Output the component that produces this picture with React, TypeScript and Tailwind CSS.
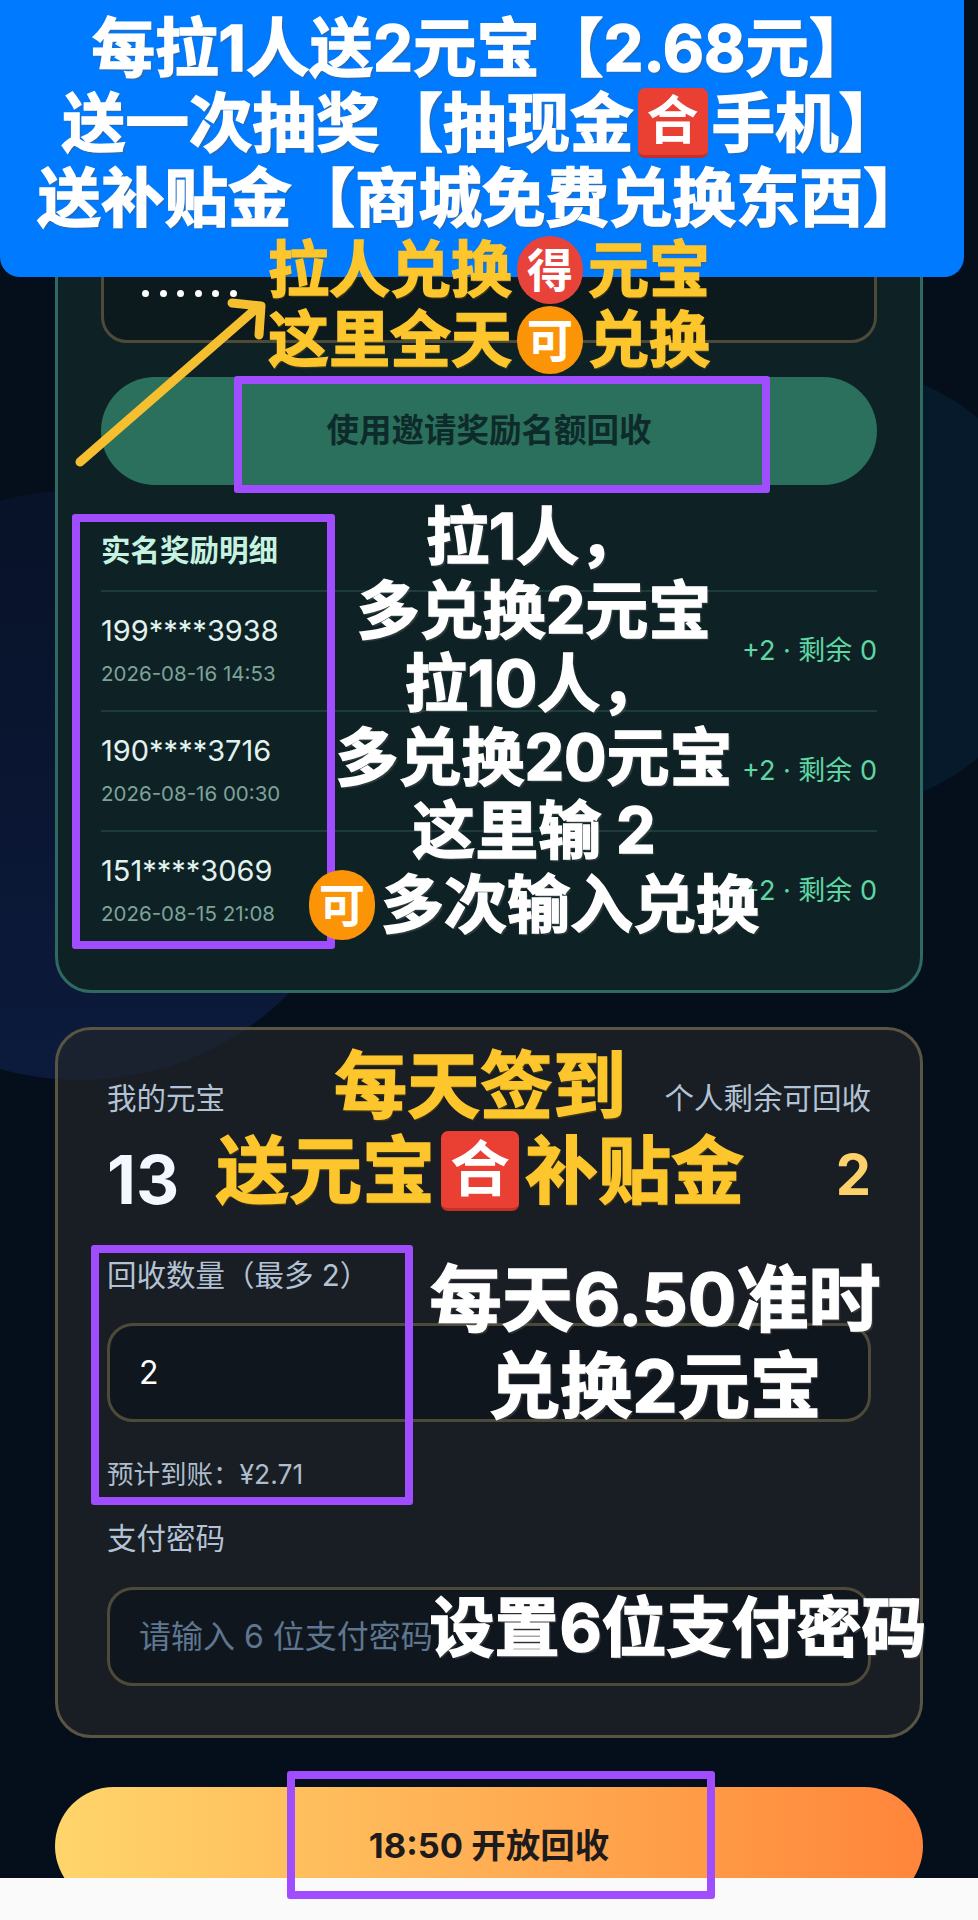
import React from "react";

const sans = 'font-["Inter","Noto_Sans_CJK_SC",sans-serif]';

function SquareEmoji({ size }: { size: "sm" | "lg" }) {
  const box = size === "sm" ? "w-[70px] h-[70px] text-[52px] mx-[4px]" : "w-[78px] h-[80px] text-[60px] mx-[6px]";
  return (
    <span className={`relative inline-flex shrink-0 items-center justify-center rounded-[7px] bg-[#ea3f33] text-white font-bold leading-none border-b-[3px] border-[#c62f27] [text-shadow:none] [-webkit-text-stroke:0] ${box}`}>
      合
    </span>
  );
}

function CircleEmoji({ char, tone, size = "w-[66px] h-[68px] text-[46px] mx-[5px]" }: { char: string; tone: "red" | "orange"; size?: string }) {
  const bg = tone === "red" ? "bg-[#e8433a]" : "bg-[#fb9507]";
  return (
    <span className={`inline-flex shrink-0 items-center justify-center rounded-full text-white font-bold leading-none [text-shadow:none] [-webkit-text-stroke:0] ${bg} ${size}`}>
      {char}
    </span>
  );
}

const rows = [
  { phone: "199****3938", date: "2026-08-16 14:53" },
  { phone: "190****3716", date: "2026-08-16 00:30" },
  { phone: "151****3069", date: "2026-08-15 21:08" },
];

const marker = "absolute border-[8px] border-[#a04cff] rounded-[3px]";
const whiteText = "text-white font-bold [-webkit-text-stroke:1.5px_#ffffff] [text-shadow:2px_2px_1px_rgba(90,90,90,0.45)]";
const yellowText = "text-[#fcc62c] font-bold [-webkit-text-stroke:1.5px_#fcc62c] [text-shadow:1px_2px_1px_rgba(120,90,10,0.5)]";
const lineRow = "flex items-center justify-center whitespace-nowrap";

export default function App() {
  return (
    <div className={`relative w-[978px] h-[1920px] overflow-hidden bg-[#fafafa] ${sans}`}>
      <main className="relative h-[1878px] overflow-hidden bg-[#050f1c] px-[55px] pt-[180px]">
        <div className="absolute left-[-215px] top-[490px] h-[590px] w-[590px] rounded-full bg-gradient-to-b from-[#081228] to-[#0c1a3c]" />
        <div className="absolute left-[613px] top-[366px] h-[444px] w-[444px] rounded-full bg-[#071a2c]" />

        <section className="relative rounded-[36px] border-[3px] border-[#2f6a62] bg-[#0e2226] px-[43px] pt-[61px] pb-[40px]">
          <div className="flex h-[99px] items-center gap-[10.6px] rounded-[26px] border-[3px] border-[#4e4a3a] bg-[#0c191d] pl-[38px]">
            {[0, 1, 2, 3, 4, 5].map((i) => (
              <span key={i} className="h-[7px] w-[7px] rounded-full bg-white" />
            ))}
          </div>
          <button className="mt-[34px] flex h-[108px] w-full items-center justify-center rounded-full bg-[#2a705c] text-[32.5px] font-semibold text-[#0e2a2a]">
            使用邀请奖励名额回收
          </button>
          <h2 className="mt-[44px] mb-[19px] h-[42px] text-[29.5px] font-bold leading-[42px] text-[#c6f3e0]">实名奖励明细</h2>
          {rows.map((row) => (
            <div key={row.phone} className="flex h-[120px] items-center justify-between border-t-[2px] border-[#1e3b3c]">
              <div>
                <div className="text-[29px] leading-[36px] text-[#e2f2ee]">{row.phone}</div>
                <div className="mt-[10px] text-[20.5px] leading-[30px] text-[#7da398]">{row.date}</div>
              </div>
              <div className="text-[27px] text-[#5fd6a3]">+2 · 剩余 0</div>
            </div>
          ))}
        </section>

        <section className="relative mt-[34px] rounded-[36px] border-[3px] border-[#5a5443] bg-[#24282a]/60 px-[49px] pt-[48px] pb-[49px]">
          <div className="flex justify-between">
            <div>
              <div className="text-[29.5px] leading-[40px] text-[#b3c2d4]">我的元宝</div>
              <div className="mt-[26px] text-[67px] font-bold leading-[72px] text-[#f3f7ff]">13</div>
            </div>
            <div className="text-right">
              <div className="text-[29.5px] leading-[40px] text-[#b3c2d4]">个人剩余可回收</div>
              <div className="mt-[21px] text-[56px] font-bold leading-[72px] text-[#fcd06a]">2</div>
            </div>
          </div>
          <label className="mt-[39px] block text-[29.5px] leading-[40px] text-[#b3c2d4]">回收数量（最多 2）</label>
          <input
            readOnly
            value="2"
            className="mt-[28px] block h-[99px] w-full rounded-[26px] border-[3px] border-[#4e4a3a] bg-[#10161d] px-[29px] text-[32px] text-white outline-none"
          />
          <div className="mt-[34px] text-[26.5px] leading-[36px] text-[#aebccb]">预计到账：¥2.71</div>
          <label className="mt-[26px] block text-[29.5px] leading-[40px] text-[#b3c2d4]">支付密码</label>
          <input
            readOnly
            placeholder="请输入 6 位支付密码"
            className="mt-[29px] block h-[99px] w-full rounded-[26px] border-[3px] border-[#4e4a3a] bg-[#10161d] px-[29px] text-[32px] text-white outline-none placeholder:text-[#5f7690]"
          />
        </section>

        <button className="relative mt-[49px] flex h-[118px] w-full items-center justify-center rounded-full bg-gradient-to-r from-[#ffd56b] to-[#ff853a] text-[34.5px] font-bold text-[#1d1b1b]">
          18:50 开放回收
        </button>
      </main>

      {/* Annotation markers */}
      <div className={`${marker} left-[234px] top-[376px] h-[117px] w-[536px]`} />
      <div className={`${marker} left-[72px] top-[514px] h-[435px] w-[263px]`} />
      <div className={`${marker} left-[91px] top-[1245px] h-[260px] w-[322px]`} />
      <div className={`${marker} left-[287px] top-[1771px] h-[128px] w-[428px]`} />

      {/* Blue banner */}
      <header className={`absolute left-0 top-0 h-[277px] w-[964px] rounded-b-[20px] bg-[#007aff] pt-[10px] text-[63.5px] leading-[75px] ${whiteText}`}>
        <div className={`${lineRow} h-[75px]`}>每拉1人送2元宝【2.68元】</div>
        <div className={`${lineRow} h-[75px]`}>
          送一次抽奖【抽现金<SquareEmoji size="sm" />手机】
        </div>
        <div className={`${lineRow} h-[75px]`}>送补贴金【商城免费兑换东西】</div>
      </header>

      {/* Yellow annotation over the banner edge */}
      <div className={`absolute left-[189px] top-[235px] w-[600px] text-[61px] leading-[70px] ${yellowText}`}>
        <div className={`${lineRow} h-[70px]`}>
          拉人兑换<CircleEmoji char="得" tone="red" />元宝
        </div>
        <div className={`${lineRow} h-[70px]`}>
          这里全天<CircleEmoji char="可" tone="orange" />兑换
        </div>
      </div>

      <svg className="absolute left-[70px] top-[295px]" width="205" height="180" viewBox="70 295 205 180" fill="none">
        <path d="M80 462 L258 307 M232 303 L261 306 L259 335" stroke="#f5bf2f" strokeWidth="9" strokeLinecap="round" strokeLinejoin="round" />
      </svg>

      {/* White annotation over the detail list */}
      <div className={`absolute left-[234px] top-[500px] w-[600px] text-[63px] leading-[73.6px] ${whiteText}`}>
        <div className={`${lineRow} h-[73.6px]`}>拉1人，</div>
        <div className={`${lineRow} h-[73.6px]`}>多兑换2元宝</div>
        <div className={`${lineRow} h-[73.6px]`}>拉10人，</div>
        <div className={`${lineRow} h-[73.6px]`}>多兑换20元宝</div>
        <div className={`${lineRow} h-[73.6px]`}>这里输 2</div>
        <div className={`${lineRow} h-[73.6px] gap-[6px]`}>
          <CircleEmoji char="可" tone="orange" size="w-[66px] h-[70px] text-[46px]" />
          多次输入兑换
        </div>
      </div>

      {/* Yellow sign-in annotation */}
      <div className={`absolute left-[180px] top-[1043px] w-[600px] text-[73px] leading-[85px] ${yellowText}`}>
        <div className={`${lineRow} h-[85px]`}>每天签到</div>
        <div className={`${lineRow} h-[85px]`}>
          送元宝<SquareEmoji size="lg" />补贴金
        </div>
      </div>

      {/* White exchange annotation */}
      <div className={`absolute left-[355px] top-[1255px] w-[600px] text-[72px] leading-[87px] ${whiteText}`}>
        <div className={`${lineRow} h-[87px]`}>每天6.50准时</div>
        <div className={`${lineRow} h-[87px]`}>兑换2元宝</div>
      </div>

      <div className={`absolute left-[378px] top-[1590px] w-[600px] text-[65px] leading-[76px] ${lineRow} ${whiteText}`}>设置6位支付密码</div>
    </div>
  );
}
